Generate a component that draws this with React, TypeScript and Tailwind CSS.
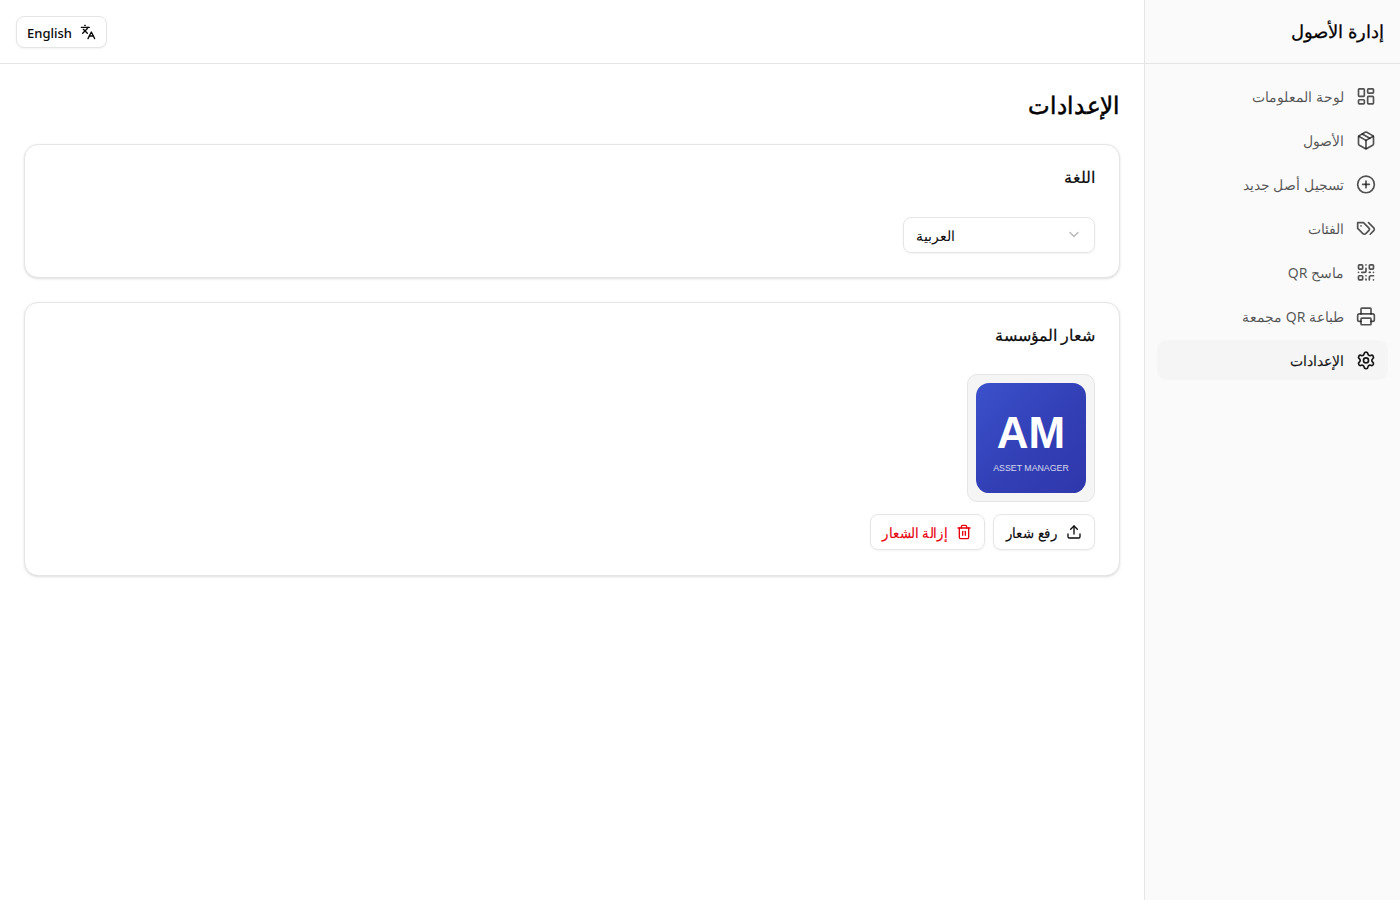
import type { SVGProps } from "react";
import {
  LayoutDashboard, Package, CirclePlus, QrCode, Printer, Settings,
  Languages, ChevronDown, Upload, Trash2,
} from "lucide-react";

function Tags(props: SVGProps<SVGSVGElement>) {
  return (
    <svg viewBox="0 0 24 24" fill="none" stroke="currentColor" strokeWidth="2" strokeLinecap="round" strokeLinejoin="round" {...props}>
      <path d="m15 5 6.3 6.3a2.4 2.4 0 0 1 0 3.4L17 19" />
      <path d="M9 5H2v7l6.29 6.29c.94.94 2.48.94 3.42 0l3.58-3.58c.94-.94.94-2.48 0-3.42L9 5Z" />
      <path d="M6 9.01V9" />
    </svg>
  );
}

const items = [
  { label: "لوحة المعلومات", Icon: LayoutDashboard },
  { label: "الأصول", Icon: Package },
  { label: "تسجيل أصل جديد", Icon: CirclePlus },
  { label: "الفئات", Icon: Tags },
  { label: "ماسح QR", Icon: QrCode },
  { label: "طباعة QR مجمعة", Icon: Printer },
  { label: "الإعدادات", Icon: Settings, active: true },
];

function Sidebar() {
  return (
    <aside className="flex w-64 shrink-0 flex-col border-l border-[#e5e5e5] bg-[#fafafa]">
      <div className="flex h-16 items-center border-b border-[#e5e5e5] px-4">
        <span className="-translate-y-px text-lg text-black [-webkit-text-stroke:0.25px]">إدارة الأصول</span>
      </div>
      <nav className="flex flex-col gap-1 p-3">
        {items.map(({ label, Icon, active }) => (
          <a
            key={label}
            className={
              active
                ? "flex items-center gap-3 rounded-[10px] bg-[#f5f5f5] px-3 py-2.5 text-sm text-[#171717] [-webkit-text-stroke:0.15px]"
                : "flex items-center gap-3 rounded-[10px] px-3 py-2.5 text-sm text-[#0a0a0a]/70"
            }
          >
            <Icon className="size-5 shrink-0 translate-y-[0.4px]" />
            <span className="translate-y-px">{label}</span>
          </a>
        ))}
      </nav>
    </aside>
  );
}

function Logo() {
  return (
    <svg viewBox="0 0 200 200" className="size-[110px]">
      <defs>
        <linearGradient id="logo" x1="0" y1="0" x2="1" y2="1">
          <stop offset="0" stopColor="#3b51cc" />
          <stop offset="0.55" stopColor="#323fb5" />
          <stop offset="1" stopColor="#3037ac" />
        </linearGradient>
      </defs>
      <rect width="200" height="200" rx="24" fill="url(#logo)" />
      <text x="100" y="118" textAnchor="middle" fontSize="80" fontWeight="700" fill="#fff" fontFamily="Liberation Sans, sans-serif">AM</text>
      <text x="100" y="160" textAnchor="middle" fontSize="16" fill="#fff" fillOpacity="0.8" fontFamily="Liberation Sans, sans-serif">ASSET MANAGER</text>
    </svg>
  );
}

export default function App() {
  return (
    <div dir="rtl" className="flex h-screen bg-white font-['Noto_Sans',sans-serif] text-[#0a0a0a]">
      <Sidebar />
      <div className="flex flex-1 flex-col">
        <header className="flex h-16 items-center justify-end border-b border-[#e5e5e5] px-4">
          <button className="flex h-8 items-center gap-2 rounded-lg border border-[#e5e5e5] bg-white px-2.5 text-[13px] font-medium shadow-xs">
            <Languages className="size-4" />
            <span className="translate-y-0.5">English</span>
          </button>
        </header>
        <main className="flex flex-col gap-6 p-6">
          <h1 className="origin-right translate-y-px scale-x-[0.957] text-2xl text-black [-webkit-text-stroke:0.5px]">الإعدادات</h1>
          <section className="flex h-[134px] flex-col rounded-[14px] border border-[#e5e5e5] bg-white p-6 shadow-sm">
            <h2 className="text-base leading-none [-webkit-text-stroke:0.2px]">اللغة</h2>
            <button className="mt-8 flex h-9 w-48 items-center justify-between rounded-lg border border-[#e5e5e5] px-3 text-sm shadow-xs">
              <ChevronDown className="size-4 -translate-y-[0.5px] text-[#737373] opacity-50" />
              <span className="translate-y-px">العربية</span>
            </button>
          </section>
          <section className="flex h-[273.5px] flex-col rounded-[14px] border border-[#e5e5e5] bg-white p-6 shadow-sm">
            <h2 className="text-base leading-none [-webkit-text-stroke:0.2px]">شعار المؤسسة</h2>
            <div className="mt-[31.4px] flex size-32 items-center justify-center rounded-[10px] border border-[#e5e5e5] bg-[#f5f5f5]">
              <Logo />
            </div>
            <div className="mt-3 flex gap-2">
              <button className="flex h-9 w-[102.4px] items-center gap-2 rounded-lg border border-[#e5e5e5] px-3 text-sm whitespace-nowrap shadow-xs [-webkit-text-stroke:0.15px]">
                <Upload className="size-4 shrink-0" />
                <span className="origin-right translate-y-px scale-x-95">رفع شعار</span>
              </button>
              <button className="flex h-9 w-[114.6px] items-center gap-2 rounded-lg border border-[#e5e5e5] px-3 text-sm whitespace-nowrap text-[#e7000b] shadow-xs [-webkit-text-stroke:0.15px]">
                <Trash2 className="size-4 shrink-0" />
                <span className="origin-right translate-y-px scale-x-95">إزالة الشعار</span>
              </button>
            </div>
          </section>
        </main>
      </div>
    </div>
  );
}
